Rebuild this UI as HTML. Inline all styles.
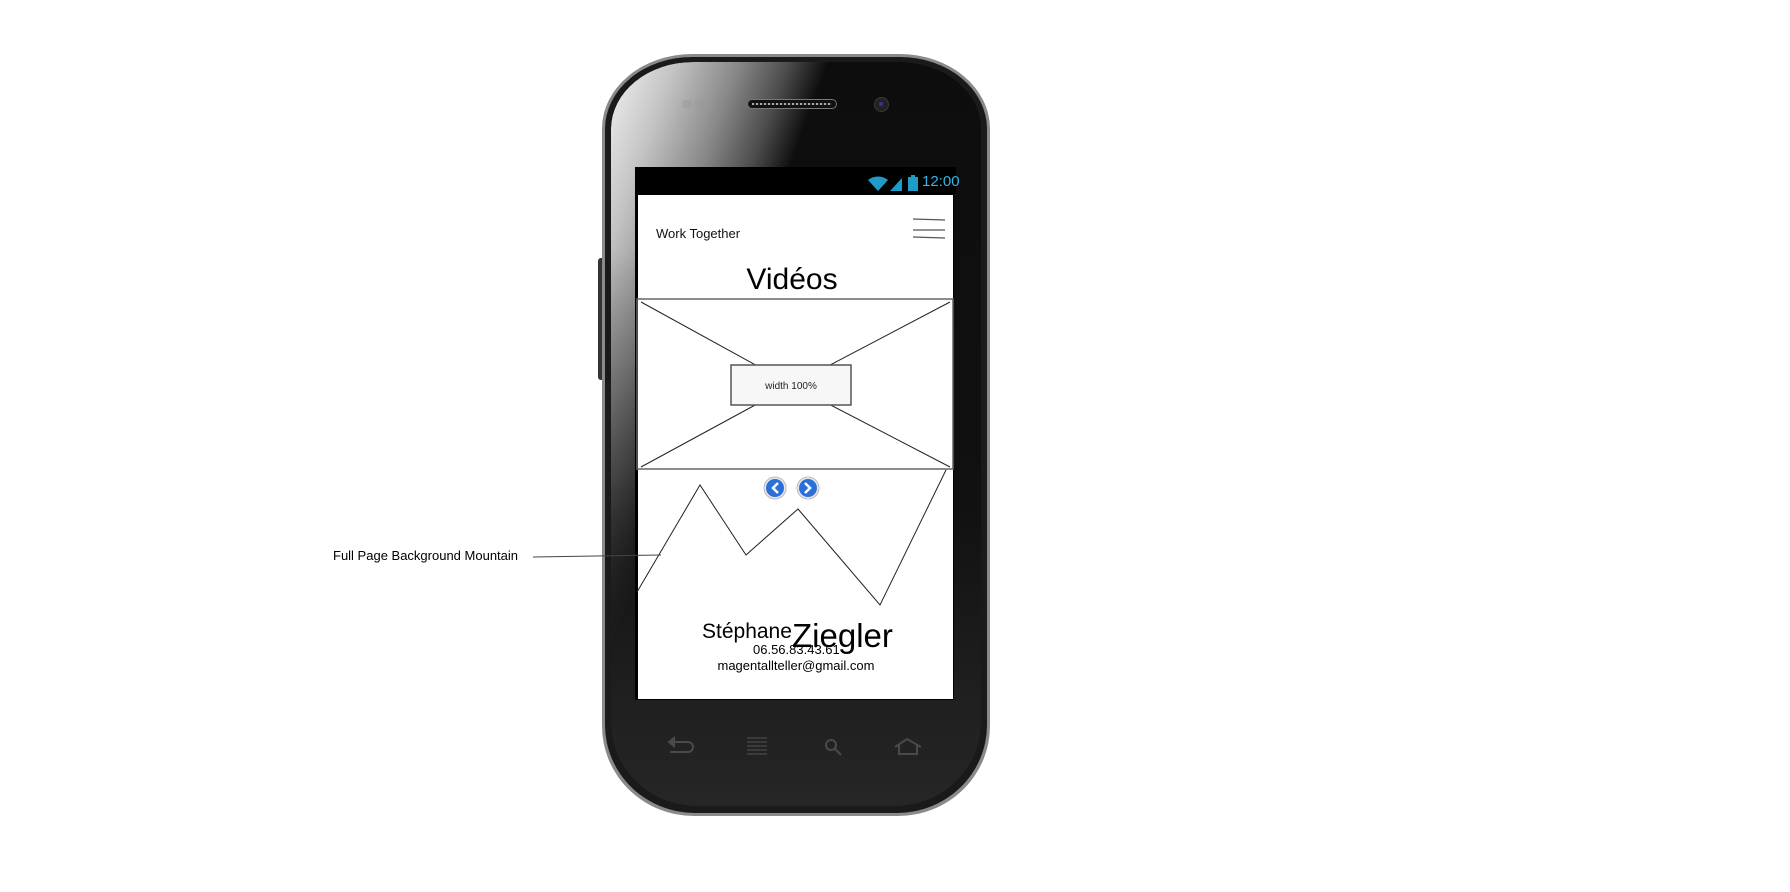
<!DOCTYPE html>
<html><head><meta charset="utf-8"><style>
html,body{margin:0;padding:0;background:#fff;width:1790px;height:892px;overflow:hidden;font-family:"Liberation Sans",sans-serif;}
.abs{position:absolute;}
</style></head><body>
<div class="abs" style="left:333px;top:548px;font-size:13px;color:#000;white-space:nowrap">Full Page Background Mountain</div>

<!-- side button -->
<div class="abs" style="left:598px;top:258px;width:8px;height:122px;background:#333;border-radius:3px 0 0 3px"></div>
<!-- phone body -->
<div class="abs" style="left:602px;top:54px;width:388px;height:762px;border-radius:90px 90px 92px 92px / 75px 75px 90px 90px;background:#8a8a8a;"></div>
<div class="abs" style="left:605px;top:57px;width:382px;height:756px;border-radius:87px 87px 90px 90px / 72px 72px 88px 88px;background:#1a1a1a;"></div>
<div class="abs" style="left:611px;top:62px;width:370px;height:744px;border-radius:82px 82px 86px 86px / 67px 67px 84px 84px;background:linear-gradient(180deg,#0d0d0d,#111 60%,#1f1f1f 85%,#262626);"></div>
<div class="abs" style="left:611px;top:62px;width:370px;height:744px;border-radius:82px 82px 86px 86px / 67px 67px 84px 84px;background:linear-gradient(110deg,#f2f2f2 0%,#c4c4c4 10%,#888 20%,#4a4a4a 28%,rgba(20,20,20,0) 34%);-webkit-mask-image:linear-gradient(180deg,#000 0%,#000 25%,rgba(0,0,0,.6) 55%,rgba(0,0,0,0) 82%);mask-image:linear-gradient(180deg,#000 0%,#000 25%,rgba(0,0,0,.6) 55%,rgba(0,0,0,0) 82%);"></div>
<!-- speaker & camera -->
<div class="abs" style="left:747px;top:99px;width:90px;height:10px;border-radius:5px;background:#111;border:1px solid #777;box-sizing:border-box;"></div>
<div class="abs" style="left:752px;top:103px;width:80px;height:2px;background:repeating-linear-gradient(90deg,#aaa 0 2px,#222 2px 4px)"></div>
<div class="abs" style="left:682px;top:100px;width:10px;height:8px;border-radius:4px;background:#999;opacity:.5"></div>
<div class="abs" style="left:695px;top:100px;width:16px;height:8px;border-radius:4px;background:#999;opacity:.5"></div>
<div class="abs" style="left:874px;top:97px;width:13px;height:13px;border-radius:50%;background:#222;border:1px solid #3a3a3a"></div>
<div class="abs" style="left:879px;top:102px;width:4px;height:4px;border-radius:50%;background:#4a2a8a"></div>

<!-- status bar -->
<div class="abs" style="left:635px;top:167px;width:321px;height:27px;background:#000"></div>
<svg class="abs" style="left:866px;top:172px" width="60" height="20" viewBox="0 0 60 20">
<path d="M2 8 A16 16 0 0 1 22 8 L12 19 Z" fill="#1f9bc9"/>
<path d="M24 19 L36 19 L36 6 Z" fill="#1f9bc9"/>
<rect x="42" y="5" width="10" height="14" fill="#1f9bc9"/><rect x="45" y="3" width="4" height="2" fill="#1f9bc9"/>
</svg>
<div class="abs" style="left:922px;top:173px;font-size:15px;color:#33b5e5">12:00</div>

<!-- screen -->
<div class="abs" style="left:635px;top:194px;width:319px;height:506px;background:#000"></div>
<div class="abs" style="left:638px;top:195px;width:315px;height:504px;background:#fff"></div>
<div class="abs" style="left:656px;top:226px;font-size:13px;color:#111">Work Together</div>
<div class="abs" style="left:632px;top:263px;width:320px;text-align:center;font-size:30px;color:#000">Vidéos</div>

<svg class="abs" style="left:0;top:0" width="1790" height="892">
<g stroke="#555" fill="none" stroke-width="1.3">
<path d="M913 219 L945 220 M913 230 L945 230 M913 237 L945 238"/>
</g>
<rect x="637" y="299" width="316" height="170" fill="none" stroke="#666" stroke-width="1.5"/>
<g stroke="#222" stroke-width="1" fill="none">
<path d="M641 302 L792 385 M950 302 L792 385 M641 467 L792 385 M950 467 L792 385"/>
</g>
<rect x="731" y="365" width="120" height="40" fill="#f7f7f7" stroke="#555" stroke-width="1.5"/>
<text x="791" y="389" font-size="10" text-anchor="middle" font-family="Liberation Sans" fill="#222">width 100%</text>
<g stroke="#222" stroke-width="1" fill="none">
<path d="M637 592 L700 485 L746 555 L798 509 L880 605 L946 470"/>
<path d="M533 557 L661 555" stroke="#444"/>
</g>
<g>
<circle cx="775" cy="488" r="11" fill="#e8e8e8" stroke="#bbb"/><circle cx="775" cy="488" r="9" fill="#2a70d8"/>
<path d="M778 483 L773 488 L778 493" stroke="#fff" stroke-width="2.5" fill="none"/>
<circle cx="808" cy="488" r="11" fill="#e8e8e8" stroke="#bbb"/><circle cx="808" cy="488" r="9" fill="#2a70d8"/>
<path d="M805 483 L810 488 L805 493" stroke="#fff" stroke-width="2.5" fill="none"/>
</g>
<!-- nav buttons -->
<g stroke="#4a4a4a" stroke-width="2" fill="none">
<path d="M670 742 L688 742 A5 5 0 0 1 688 752 L670 752"/><path d="M669 742 L674 738 L674 746 Z" fill="#4a4a4a"/>
<path d="M747 738 L767 738 M747 742 L767 742 M747 746 L767 746 M747 750 L767 750 M747 754 L767 754" stroke-width="1.3"/>
<circle cx="831" cy="745" r="5"/><path d="M835 749 L841 755"/>
<path d="M895 747 L907 739 L921 747 M899 745 L899 754 L917 754 L917 745"/>
</g>
</svg>

<div class="abs" style="left:702px;top:620px;font-size:21px;color:#000;white-space:nowrap">Stéphane</div>
<div class="abs" style="left:792px;top:617px;font-size:33px;color:#000;white-space:nowrap">Ziegler</div>
<div class="abs" style="left:753px;top:642px;font-size:13px;color:#000">06.56.83.43.61</div>
<div class="abs" style="left:636px;top:658px;width:320px;text-align:center;font-size:13px;color:#000">magentallteller@gmail.com</div>
</body></html>
